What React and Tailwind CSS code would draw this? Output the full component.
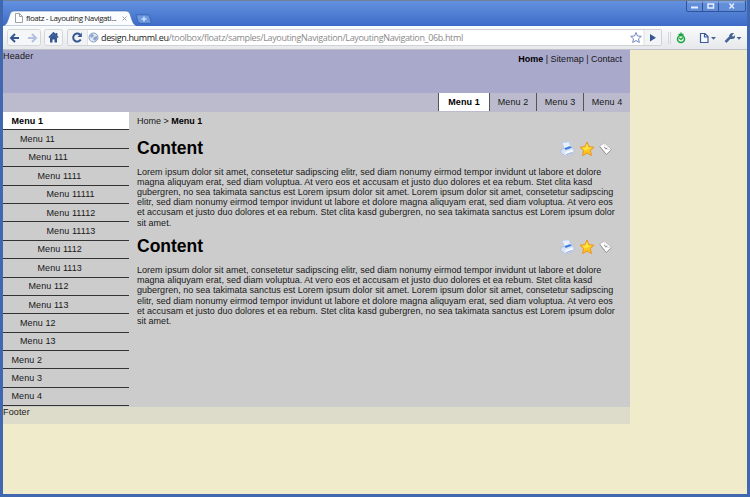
import React from "react";

const sideMenu = [
  ["Menu 1", 0], ["Menu 11", 1], ["Menu 111", 2], ["Menu 1111", 3],
  ["Menu 11111", 4], ["Menu 11112", 4], ["Menu 11113", 4], ["Menu 1112", 3],
  ["Menu 1113", 3], ["Menu 112", 2], ["Menu 113", 2], ["Menu 12", 1],
  ["Menu 13", 1], ["Menu 2", 0], ["Menu 3", 0], ["Menu 4", 0],
];
const indents = ["pl-[8.5px]", "pl-[17px]", "pl-[25.5px]", "pl-[34.5px]", "pl-[43.5px]"];

const lines = [
  "Lorem ipsum dolor sit amet, consetetur sadipscing elitr, sed diam nonumy eirmod tempor invidunt ut labore et dolore",
  "magna aliquyam erat, sed diam voluptua. At vero eos et accusam et justo duo dolores et ea rebum. Stet clita kasd",
  "gubergren, no sea takimata sanctus est Lorem ipsum dolor sit amet. Lorem ipsum dolor sit amet, consetetur sadipscing",
  "elitr, sed diam nonumy eirmod tempor invidunt ut labore et dolore magna aliquyam erat, sed diam voluptua. At vero eos",
  "et accusam et justo duo dolores et ea rebum. Stet clita kasd gubergren, no sea takimata sanctus est Lorem ipsum dolor",
  "sit amet.",
];

function Printer() {
  return (
    <svg width="15" height="16" viewBox="0 0 15 16">
      <path d="M2 1.5 9 .8l2.2 5.5-6.6 2z" fill="#e7f0ff" stroke="#b4c7ea" strokeWidth=".7" />
      <path d="m1 8.5 9.5-3L14 8v4l-8.5 3L1 12z" fill="#d9e3f7" stroke="#a9b9d8" strokeWidth=".7" />
      <path d="m4.5 7.3 5.4-2 1.8 1.5-6 2.2z" fill="#367be0" />
      <path d="m5.2 11 7.7-2.5v3.3L6 14.4z" fill="#f8fbff" />
      <path d="m6 13.7 6.5-2.4" stroke="#8dabe2" />
    </svg>
  );
}

function Star() {
  return (
    <svg width="16" height="16" viewBox="0 0 16 16">
      <path d="m8 1 2 4.7 5 .5-3.7 3.4 1.2 5L8 12l-4.5 2.6 1-5L1 6.2l5-.5z" fill="#ffc51c" stroke="#e99524" strokeLinejoin="round" />
      <path d="m8 2.8 1.4 3.6 3.3.4L6 9.6 3.2 6.900l3.2-.4z" fill="#ffe743" />
    </svg>
  );
}

function Letter() {
  return (
    <svg width="15" height="16" viewBox="0 0 15 16">
      <path d="m1.500 5 5-3 7 6.500-5.200 5z" fill="#fff" stroke="#b4b4b4" strokeLinejoin="round" strokeWidth=".8" />
      <path d="m1.700 5.400 6.600 8.200 5.100-4.800" fill="none" stroke="#999" />
      <path d="m6.500 2.600.7 5.300 5.700.8" fill="none" stroke="#d3d3d3" strokeWidth=".8" />
      <path d="m6.400 6.200 1.400 1.700 1.600-1" fill="none" stroke="#888" />
    </svg>
  );
}

function Article() {
  return (
    <article className="h-[98.4px]">
      <div className="flex h-[30px] items-center justify-between">
        <h2 className="pt-px text-[17.5px] font-bold leading-[20px] text-black">Content</h2>
        <div className="mr-[17px] mt-1 flex gap-[3.5px]"><Printer /><Star /><Letter /></div>
      </div>
      <div className="pt-[4.5px] text-[9px] leading-[10.2px] tracking-[0.018px] text-[#181818]">
        {lines.map((line) => <p key={line} className="whitespace-nowrap">{line}</p>)}
      </div>
    </article>
  );
}

function WindowButtons() {
  return (
    <svg width="60" height="12" viewBox="0 0 60 12">
      <path d="M.5 0v9q0 1.5 1.5 1.5h56q1.5 0 1.5-1.5V0M16.5 0v10.5M32.500 0v10.500" fill="#6791d8" fillOpacity=".5" stroke="#315399" />
      <path d="M1.500 1h57" stroke="#92b2e7" />
      <path d="M5 6.500h7" stroke="#e8f0ff" strokeWidth="2" />
      <rect x="22" y="3" width="5.500" height="4" fill="none" stroke="#e8f0ff" strokeWidth="1.500" />
      <path d="m43.500 2.500 4.500 5m0-5-4.500 5" stroke="#e8f0ff" strokeWidth="1.300" />
    </svg>
  );
}

function TitleBar() {
  return (
    <div className="flex h-[26px] justify-between border-t border-[#6e7f96] bg-gradient-to-b from-[#6492df] to-[#3d6bc8]">
      <div className="flex pt-[9px]">
        <div className="relative h-4 w-[137px]">
          <svg className="absolute left-0 top-0" width="137" height="16" viewBox="0 0 137 16">
            <path d="M0 16c3-1 4-3 5-6l2-6q1-3 4-3h112q3 0 4 3l2 6c1 3 2 5 5 6z" fill="#fbfcfd" stroke="#4269aa" strokeWidth=".6" />
          </svg>
          <div className="relative flex h-4 items-center pl-3">
            <svg className="shrink-0" width="8" height="10" viewBox="0 0 8 10"><path d="M.5.5h4l3 3v6h-7zM4.500.500v3h3" fill="#fff" stroke="#858b91" strokeWidth=".8" /></svg>
            <span className="ml-[3px] w-[92px] shrink-0 whitespace-nowrap font-['Open_Sans',sans-serif] text-[8px] leading-4 tracking-[-0.4px] text-[#222]">floatz - Layouting Navigati...</span>
            <svg className="ml-[4px] shrink-0" width="5" height="5" viewBox="0 0 5 5"><path d="m.5.5 4 4m0-4-4 4" stroke="#a1a5aa" /></svg>
          </div>
        </div>
        <svg className="-ml-[5px] mt-[4px]" width="18" height="11" viewBox="0 0 18 11">
          <path d="M1 .8h11q2 0 2.600 2l1.400 5q.5 1.500-1.500 1.500H5.500q-2 0-2.500-2z" fill="#6b98df" stroke="#315ba7" strokeWidth=".7" />
          <path d="M9 2.500v5M6.500 5h5" stroke="#c9dcfa" strokeWidth="1.500" />
        </svg>
      </div>
      <div className="mr-[1px]"><WindowButtons /></div>
    </div>
  );
}

function Toolbar() {
  return (
    <div className="flex h-6 items-center border-b border-[#c1c1cb] bg-gradient-to-b from-[#fafbfc] to-[#e7e8eb] pl-[4px]">
      <svg className="shrink-0" width="34" height="18" viewBox="0 0 34 18">
        <rect x=".5" y=".5" width="33" height="16" rx="2" fill="#f5f6f7" stroke="#d4d6da" />
        <path d="M12 9H4.500m3.500-4-4 4 4 4" fill="none" stroke="#345693" strokeWidth="2" />
        <path d="M21 9h7.500m-3.500-4 4 4-4 4" fill="none" stroke="#b1c1de" strokeWidth="2" />
      </svg>
      <svg className="ml-[3px] shrink-0" width="19" height="18" viewBox="0 0 19 18">
        <rect x=".5" y=".5" width="18" height="16" rx="2" fill="#f5f6f7" stroke="#d4d6da" />
        <path d="m5 8.500 4.500-4.500L14 8.500M12.500 4v3" fill="none" stroke="#345693" strokeWidth="1.700" />
        <path d="M6 8.500 9.500 5 13 8.500v5h-2.500v-3h-2v3H6z" fill="#345693" />
      </svg>
      <div className="ml-[4px] flex h-[17px] w-[595px] shrink-0 items-center rounded-[2px] border border-[#cfd1d5] bg-white">
        <svg className="shrink-0" width="20" height="15" viewBox="0 0 20 15">
          <path d="M0 0h19v15H0z" fill="#f2f3f5" />
          <path d="M19.500 0v15" stroke="#e2e3e6" />
          <path d="M12.700 9.500A4 4 0 1 1 12 4.700" fill="none" stroke="#345693" strokeWidth="2" />
          <path d="M13.800 2.500v4.500H9.500z" fill="#345693" />
        </svg>
        <svg width="11" height="11" viewBox="0 0 11 11" className="shrink-0">
          <circle cx="5.500" cy="5.500" r="4.500" fill="#e2e9f5" stroke="#8299c1" />
          <path d="m2 3 2-1 2 1-1 2-2 1zm4 2 3-1v3l-2 2-2-2z" fill="#8ea5cc" />
        </svg>
        <span className="ml-[2px] grow whitespace-nowrap font-['Open_Sans',sans-serif] text-[9px] leading-[15px] tracking-[-0.35px] text-[#8a8a8a]"><span className="text-[#222]">design.humml.eu</span>/toolbox/floatz/samples/LayoutingNavigation/LayoutingNavigation_06b.html</span>
        <svg className="shrink-0" width="34" height="15" viewBox="0 0 34 15">
          <path d="M17 0h17v15H17z" fill="#f3f4f6" />
          <path d="M17 0v15" stroke="#dedfe2" />
          <path d="m9 2.500 1.500 3.500 3.800.300-2.800 2.500.8 3.700L9 10.500l-3.300 2 .8-3.700-2.800-2.500 3.800-.300z" fill="#fff" stroke="#6f8abd" />
          <path d="m23 4 6 3.800-6 3.700z" fill="#345693" />
        </svg>
      </div>
      <svg className="ml-[6px] shrink-0" width="77" height="18" viewBox="0 0 77 18">
        <path d="M.5 3v12M2.500 3v12" stroke="#d5d6d9" />
        <circle cx="13" cy="10" r="3.500" fill="#e0f4e2" stroke="#19a33c" strokeWidth="1.500" />
        <path d="M13 3.500V6M10.500 5.500h5M11 9l2 1.500 2-2" fill="none" stroke="#19a33c" strokeWidth="1.300" />
        <path d="M32.500 4.500h4.500l3 3v6h-7.500zM36.500 4.500v3.500H40" fill="#f7faff" stroke="#3c5c99" strokeWidth="1.200" />
        <path d="M43 8h5l-2.500 2.800zM68.500 8h5L71 10.800z" fill="#466397" />
        <path d="m57.500 13 4.500-4.500" stroke="#466397" strokeWidth="2.500" />
        <path d="M66 4.300 64 6.500l1 1.200 2-1.500c.4 2.200-.8 4-2.800 3.900l-2-.2-1.200-2c0-2.500 2-4.500 5-3.600" fill="#466397" />
      </svg>
    </div>
  );
}

export default function App() {
  return (
    <div className="flex h-[497px] w-[750px] flex-col overflow-hidden border-b-[3px] border-l-[3px] border-r-[3px] border-[#4068b0] bg-[#efebcb] font-['Liberation_Sans',Arial,sans-serif] text-[9px] leading-[11px] text-[#181818]">
      <TitleBar />
      <Toolbar />
      <div className="w-[627px]">
        <header className="flex h-[43px] justify-between bg-[#a9a9cc]">
          <span className="pt-px tracking-[0.15px]">Header</span>
          <span className="mr-2 mt-1 text-[9px]"><b className="text-black">Home</b> | Sitemap | Contact</span>
        </header>
        <nav className="flex h-[19px] justify-end bg-[#bbbbcd] pb-px text-center leading-[18px] tracking-[0.08px]">
          <b className="w-[51px] border-l border-[#555] bg-white text-black">Menu 1</b>
          <span className="w-[47px] border-l border-[#555]">Menu 2</span>
          <span className="w-[47px] border-l border-[#555]">Menu 3</span>
          <span className="w-[47px] border-l border-[#555]">Menu 4</span>
        </nav>
        <main className="flex h-[294.500px] bg-[#ccc]">
          <aside className="w-[125.500px] shrink-0">
            {sideMenu.map(([name, depth], i) => (
              <div key={name} className={`h-[18.400px] border-b border-[#333] pt-[0.6px] leading-[17.400px] tracking-[0.08px] ${indents[depth]} ${i === 0 ? "bg-white font-bold text-black" : ""}`}>{name}</div>
            ))}
          </aside>
          <section className="min-w-0 grow pl-[8.500px]">
            <div className="h-[20px] leading-[18px]">Home &gt; <b className="text-black">Menu 1</b></div>
            <Article />
            <Article />
          </section>
        </main>
        <footer className="h-[17.500px] bg-[#dddbca] tracking-[0.15px]">Footer</footer>
      </div>
    </div>
  );
}
